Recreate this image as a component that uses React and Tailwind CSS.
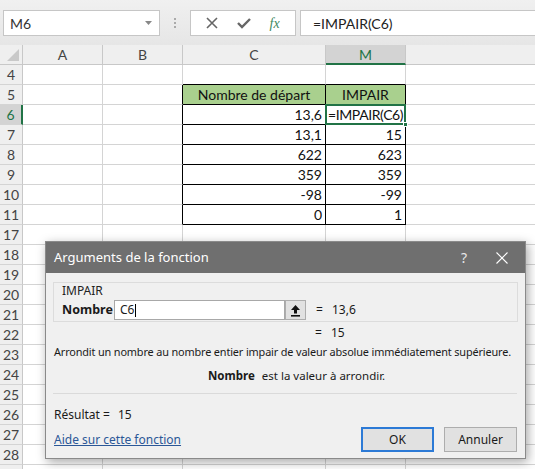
import React from 'react';

const GRID = 'border-[#d4d4d4]';

const TABLE = {
  5: { c: 'Nombre de départ', m: 'IMPAIR', head: true },
  6: { c: '13,6', m: '=IMPAIR(C6)', sel: true },
  7: { c: '13,1', m: '15' },
  8: { c: '622', m: '623' },
  9: { c: '359', m: '359' },
  10: { c: '-98', m: '-99' },
  11: { c: '0', m: '1' },
};

const ROWS = [4, 5, 6, 7, 8, 9, 10, 11, 17, 18, 19, 20, 21, 22, 23, 24, 25, 26, 27, 28, 29];

const Row = ({ n }) => {
  const t = TABLE[n];
  const sel = n === 6;
  return (
    <div className="flex h-[20px]">
      <div
        className={`w-[23px] shrink-0 flex items-center justify-center border-b text-[14px] ${GRID} ${
          sel ? 'bg-[#d3d3d3] text-[#217346] border-r-2 border-r-[#217346]' : 'bg-[#efefef] text-[#444] border-r border-r-[#c8c8c8]'
        }`}
      >
        {n === 29 ? '' : n}
      </div>
      <div className={`w-[80px] shrink-0 border-r border-b ${GRID}`}></div>
      <div className={`w-[80px] shrink-0 border-b ${GRID} border-r ${t ? 'border-r-black' : ''}`}></div>
      <div
        className={`w-[143px] shrink-0 border-r border-b flex items-center px-[3px] ${
          t ? 'border-r-black border-b-black' : n === 4 ? `border-r-[#d4d4d4] border-b-black` : GRID
        } ${t && t.head ? 'bg-[#a9d08e] justify-center' : 'justify-end'}`}
      >
        {t ? t.c : ''}
      </div>
      <div
        className={`w-[80px] shrink-0 border-r border-b flex items-center ${
          t ? 'border-r-black border-b-black' : n === 4 ? `border-r-[#d4d4d4] border-b-black` : GRID
        } ${t && t.head ? 'bg-[#a9d08e] justify-center' : 'justify-end px-[3px]'}`}
      >
        {t && !t.sel ? t.m : ''}
        {t && t.sel ? (
          <div className="relative -mx-[4px] -mt-[1px] h-[21px] w-[81px] shrink-0 border-2 border-[#217346] flex items-center pl-[1px] whitespace-nowrap tracking-[-0.4px] bg-white">
            =IMPAIR(C6)
            <span className="absolute -right-[4px] -bottom-[4px] w-[5px] h-[5px] bg-[#217346] border border-white"></span>
          </div>
        ) : null}
      </div>
      <div className={`flex-1 border-b ${GRID}`}></div>
    </div>
  );
};

const Toolbar = () => (
  <div className="h-[45px] bg-gradient-to-b from-[#f0f0f0] to-[#e6e6e6] flex items-start pt-[10px] pl-[3px] gap-0">
    <div className="w-[157px] h-[26px] bg-white border border-[#c6c6c6] flex items-center justify-between pl-[6px] pr-[6px] text-[14px] text-[#333]">
      <span>M6</span>
      <svg width="9" height="6" viewBox="0 0 9 6"><path d="M1 1 L4.5 5 L8 1 Z" fill="#888" /></svg>
    </div>
    <div className="w-[30px] h-[26px] flex flex-col items-center justify-center gap-[2px]">
      <span className="w-[2px] h-[2px] bg-[#aaa]"></span>
      <span className="w-[2px] h-[2px] bg-[#aaa]"></span>
      <span className="w-[2px] h-[2px] bg-[#aaa]"></span>
    </div>
    <div className="w-[106px] h-[26px] bg-white border border-[#c6c6c6] flex items-center justify-around px-[6px]">
      <svg width="12" height="12" viewBox="0 0 12 12"><path d="M1 1 L11 11 M11 1 L1 11" stroke="#666" strokeWidth="1.6" /></svg>
      <svg width="14" height="12" viewBox="0 0 14 12"><path d="M1 6 L5 10 L13 2" stroke="#666" strokeWidth="2.4" fill="none" /></svg>
      <span className="italic text-[14px] text-[#3f8a5f] font-['Liberation_Serif',serif]">fx</span>
    </div>
    <div className="ml-[4px] flex-1 h-[26px] bg-white border border-[#c6c6c6] border-r-0 flex items-center pl-[12px] text-[14px] text-[#222]">
      =IMPAIR(C6)
    </div>
  </div>
);

const Headers = () => (
  <div className="flex h-[20px] text-[#444] text-[14px]">
    <div className="w-[23px] shrink-0 bg-[#efefef] border-r border-b border-[#c8c8c8] flex items-end justify-end p-[3px]">
      <svg width="12" height="12" viewBox="0 0 12 12"><path d="M12 0 L12 12 L0 12 Z" fill="#c9c9c9" /></svg>
    </div>
    <div className="w-[80px] shrink-0 bg-[#efefef] border-r border-b border-[#c8c8c8] flex items-center justify-center">A</div>
    <div className="w-[80px] shrink-0 bg-[#efefef] border-r border-b border-[#c8c8c8] flex items-center justify-center">B</div>
    <div className="w-[143px] shrink-0 bg-[#efefef] border-r border-b border-[#c8c8c8] flex items-center justify-center">C</div>
    <div className="w-[80px] shrink-0 bg-[#d3d3d3] border-r border-[#c8c8c8] border-b-2 border-b-[#217346] flex items-center justify-center text-[#217346]">M</div>
    <div className="flex-1 bg-[#efefef] border-b border-[#c8c8c8]"></div>
  </div>
);

const Dialog = () => (
  <div className="absolute left-[45px] top-[241px] w-[481px] h-[218px] bg-[#f0f0f0] border border-[#8a8a8a] shadow-[2px_3px_10px_rgba(0,0,0,0.35)] font-['Noto_Sans',sans-serif] text-[12px] text-[#1a1a1a] flex flex-col">
    <div className="h-[31px] bg-[#6f6f6f] flex items-center pl-[8px] text-white text-[13px]">
      <span className="flex-1">Arguments de la fonction</span>
      <span className="w-[30px] text-center text-[#e8e8e8] text-[14px]">?</span>
      <span className="w-[46px] flex justify-center">
        <svg width="12" height="12" viewBox="0 0 12 12"><path d="M0.5 0.5 L11.5 11.5 M11.5 0.5 L0.5 11.5" stroke="#fff" strokeWidth="1.1" /></svg>
      </span>
    </div>
    <div className="px-[7px] pt-[9px] flex flex-col">
      <div className="border border-[#dcdcdc] h-[40px] pl-[8px] pt-[1px] relative">
        <div className="text-[12px] leading-[14px] text-[#222]">IMPAIR</div>
        <div className="flex items-center mt-[2px]">
          <span className="font-bold w-[52px] text-[12.5px]">Nombre</span>
          <div className="w-[171px] h-[20px] bg-white border border-[#a8a8a8] flex items-center pl-[5px] text-[12px]">
            C6<span className="w-[1px] h-[13px] bg-black ml-[1px]"></span>
          </div>
          <div className="w-[21px] h-[20px] bg-[#e1e1e1] border border-[#adadad] flex items-center justify-center">
            <svg width="11" height="13" viewBox="0 0 11 13">
              <path d="M5.5 1 L10 6 L7 6 L7 9.5 L4 9.5 L4 6 L1 6 Z" fill="#111" />
              <rect x="1" y="11" width="9" height="1.6" fill="#111" />
            </svg>
          </div>
          <span className="ml-[10px] w-[16px]">=</span>
          <span>13,6</span>
        </div>
      </div>
      <div className="flex h-[21px] items-center pl-[262px]">
        <span className="w-[16px]">=</span>
        <span>15</span>
      </div>
      <div className="pl-[1px] text-[10.9px] tracking-[-0.15px] whitespace-nowrap leading-[18px]">
        Arrondit un nombre au nombre entier impair de valeur absolue immédiatement supérieure.
      </div>
      <div className="pl-[155px] mt-[7px] text-[11.5px] leading-[16px] whitespace-nowrap">
        <span className="font-bold mr-[7px]">Nombre</span>est la valeur à arrondir.
      </div>
      <div className="mt-[9px] border-t border-[#dadada] mr-[1px]"></div>
      <div className="mt-[13px] pl-[1px] leading-[16px]">
        Résultat = <span className="ml-[5px]">15</span>
      </div>
      <div className="flex items-center justify-between mt-[4px]">
        <span className="pl-[1px] text-[#2b5797] underline">Aide sur cette fonction</span>
        <div className="flex gap-[10px] pr-[1px]">
          <div className="w-[73px] h-[25px] bg-[#e1e1e1] border-2 border-[#2c7ad6] flex items-center justify-center">OK</div>
          <div className="w-[73px] h-[25px] bg-[#e1e1e1] border border-[#adadad] flex items-center justify-center">Annuler</div>
        </div>
      </div>
    </div>
  </div>
);

export default function App() {
  return (
    <div className="relative w-[535px] h-[469px] overflow-hidden bg-white font-['Lato',sans-serif] text-[14px] text-[#111]">
      <Toolbar />
      <Headers />
      {ROWS.map((n) => (
        <Row key={n} n={n} />
      ))}
      <Dialog />
    </div>
  );
}
